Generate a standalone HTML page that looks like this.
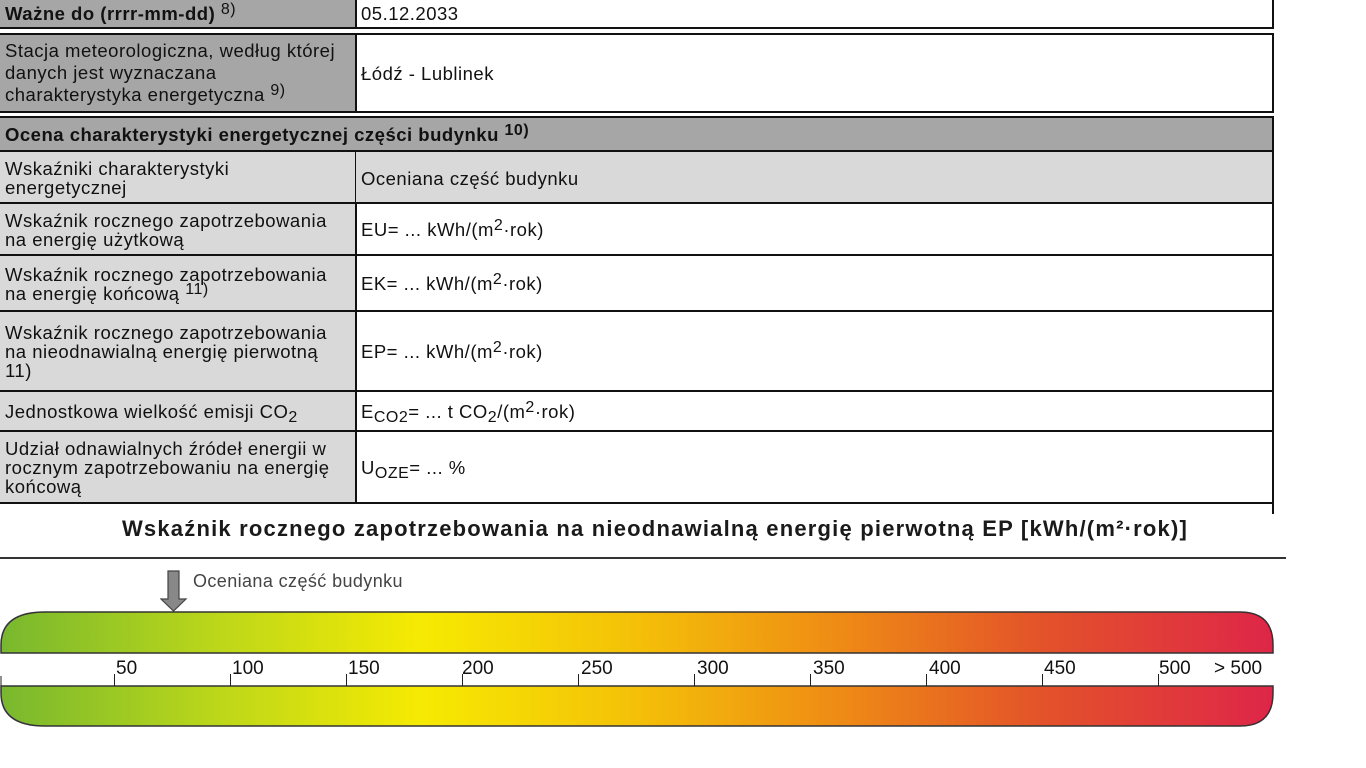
<!DOCTYPE html>
<html><head><meta charset="utf-8"><style>
*{margin:0;padding:0;box-sizing:border-box}
body{width:1366px;height:768px;background:#fff;position:relative;overflow:hidden;font-family:"Liberation Sans",Arial,sans-serif;color:#111;font-size:18.5px;letter-spacing:0.5px}
.c{position:absolute;display:flex;align-items:center;padding-left:5px;line-height:19px;border:1px solid #111;white-space:nowrap}
.g{background:#a6a6a6}.l{background:#d9d9d9}
sup{font-size:16px;vertical-align:6px;line-height:0}
sub{font-size:16px;vertical-align:-4px;line-height:0}
.t{position:absolute;font-size:19px;top:658px;letter-spacing:0}
.tk{position:absolute;width:1px;height:12px;background:#222;top:674px}
</style></head><body>
<div class="c g" style="left:-1px;top:-2px;width:358px;height:31px;font-weight:bold;border-width:1px 2px 2px 1px"><div>Ważne do (rrrr-mm-dd) <sup style="font-weight:normal">8)</sup></div></div>
<div class="c" style="left:356px;top:-2px;width:918px;height:31px;border-width:1px 2px 2px 0"><div>05.12.2033</div></div>
<div class="c g" style="left:-1px;top:33px;width:358px;height:80px;border-width:2px 2px 2px 1px"><div style="line-height:22px">Stacja meteorologiczna, według której<br>danych jest wyznaczana<br>charakterystyka energetyczna <sup>9)</sup></div></div>
<div class="c" style="left:356px;top:33px;width:918px;height:80px;border-width:2px 2px 2px 0"><div>Łódź - Lublinek</div></div>
<div class="c g" style="left:-1px;top:116px;width:1275px;height:36px;font-weight:bold;border-width:2px 2px 2px 1px"><div>Ocena charakterystyki energetycznej części budynku <sup>10)</sup></div></div>
<div class="c l" style="left:-1px;top:150px;width:358px;height:54px;border-width:2px 2px 0 1px"><div>Wskaźniki charakterystyki<br>energetycznej</div></div>
<div class="c l" style="left:356px;top:150px;width:918px;height:54px;border-width:2px 2px 0 0"><div>Oceniana część budynku</div></div>
<div class="c l" style="left:-1px;top:202px;width:358px;height:53px;border-width:2px 2px 0 1px"><div>Wskaźnik rocznego zapotrzebowania<br>na energię użytkową</div></div>
<div class="c" style="left:356px;top:202px;width:918px;height:53px;border-width:2px 2px 0 0"><div>EU= ... kWh/(m<sup>2</sup>·rok)</div></div>
<div class="c l" style="left:-1px;top:254px;width:358px;height:57px;border-width:2px 2px 0 1px"><div>Wskaźnik rocznego zapotrzebowania<br>na energię końcową <sup>11)</sup></div></div>
<div class="c" style="left:356px;top:254px;width:918px;height:57px;border-width:2px 2px 0 0"><div>EK= ... kWh/(m<sup>2</sup>·rok)</div></div>
<div class="c l" style="left:-1px;top:310px;width:358px;height:81px;border-width:2px 2px 0 1px"><div>Wskaźnik rocznego zapotrzebowania<br>na nieodnawialną energię pierwotną<br>11)</div></div>
<div class="c" style="left:356px;top:310px;width:918px;height:81px;border-width:2px 2px 0 0"><div>EP= ... kWh/(m<sup>2</sup>·rok)</div></div>
<div class="c l" style="left:-1px;top:390px;width:358px;height:41px;border-width:2px 2px 0 1px"><div>Jednostkowa wielkość emisji CO<sub>2</sub></div></div>
<div class="c" style="left:356px;top:390px;width:918px;height:41px;border-width:2px 2px 0 0"><div>E<sub>CO2</sub>= ... t CO<sub>2</sub>/(m<sup>2</sup>·rok)</div></div>
<div class="c l" style="left:-1px;top:430px;width:358px;height:74px;border-width:2px 2px 2px 1px"><div>Udział odnawialnych źródeł energii w<br>rocznym zapotrzebowaniu na energię<br>końcową</div></div>
<div class="c" style="left:356px;top:430px;width:918px;height:74px;border-width:2px 2px 2px 0"><div>U<sub>OZE</sub>= ... %</div></div>
<div style="position:absolute;left:1272px;top:500px;width:2px;height:14px;background:#111"></div>
<div style="position:absolute;left:0;top:516px;width:1310px;text-align:center;font-weight:bold;font-size:22px;letter-spacing:1.2px;color:#1a1a1a;white-space:nowrap">Wskaźnik rocznego zapotrzebowania na nieodnawialną energię pierwotną EP [kWh/(m²·rok)]</div>
<div style="position:absolute;left:0;top:557px;width:1286px;height:2px;background:#333"></div>
<svg style="position:absolute;left:160px;top:570px" width="28" height="42"><path d="M8 1h11v28h7L13.5 41 1 29h7z" fill="#888" stroke="#444" stroke-width="1.2"/></svg>
<div style="position:absolute;left:193px;top:571px;font-size:18px;letter-spacing:0.4px;color:#444">Oceniana część budynku</div>
<svg style="position:absolute;left:0;top:0" width="1366" height="768">
<defs><linearGradient id="gr" x1="0" x2="1"><stop offset="0" stop-color="#78b82e"/><stop offset="0.17" stop-color="#bcd71a"/><stop offset="0.33" stop-color="#f6ea02"/><stop offset="0.5" stop-color="#f4c008"/><stop offset="0.65" stop-color="#ef8e14"/><stop offset="0.82" stop-color="#e3522a"/><stop offset="1" stop-color="#de2648"/></linearGradient></defs>
<path d="M1 653V645Q1 612 45 612H1240Q1273 612 1273 645V653Z" fill="url(#gr)" stroke="#333" stroke-width="1.5"/>
<path d="M1 686V693Q1 726 45 726H1240Q1273 726 1273 693V686Z" fill="url(#gr)" stroke="#333" stroke-width="1.5"/>
<line x1="1" y1="676" x2="1" y2="686" stroke="#222"/>
</svg>
<div class="tk" style="left:114px"></div><div class="t" style="left:116px">50</div>
<div class="tk" style="left:230px"></div><div class="t" style="left:232px">100</div>
<div class="tk" style="left:346px"></div><div class="t" style="left:348px">150</div>
<div class="tk" style="left:462px"></div><div class="t" style="left:462px">200</div>
<div class="tk" style="left:578px"></div><div class="t" style="left:581px">250</div>
<div class="tk" style="left:694px"></div><div class="t" style="left:697px">300</div>
<div class="tk" style="left:810px"></div><div class="t" style="left:813px">350</div>
<div class="tk" style="left:926px"></div><div class="t" style="left:929px">400</div>
<div class="tk" style="left:1042px"></div><div class="t" style="left:1044px">450</div>
<div class="tk" style="left:1158px"></div><div class="t" style="left:1159px">500</div>
<div class="t" style="left:1214px">&gt; 500</div>
</body></html>
